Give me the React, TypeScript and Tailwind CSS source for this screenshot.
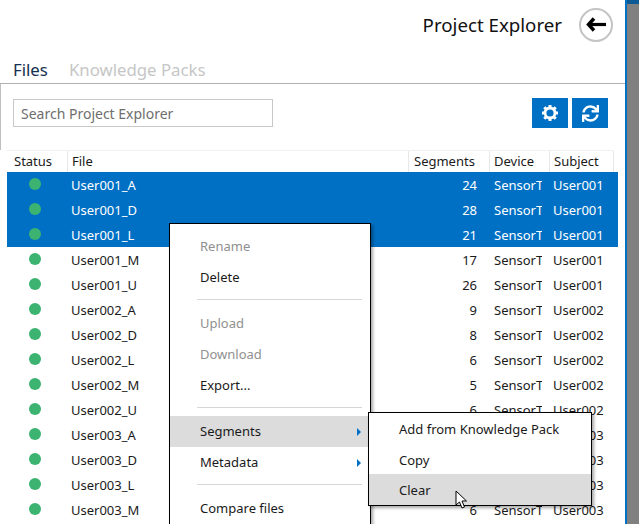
import React from 'react';
import { FaSync } from 'react-icons/fa';

type Row = { name: string; segments: number; subject: string; selected?: boolean };

const rows: Row[] = [
  { name: 'User001_A', segments: 24, subject: 'User001', selected: true },
  { name: 'User001_D', segments: 28, subject: 'User001', selected: true },
  { name: 'User001_L', segments: 21, subject: 'User001', selected: true },
  { name: 'User001_M', segments: 17, subject: 'User001' },
  { name: 'User001_U', segments: 26, subject: 'User001' },
  { name: 'User002_A', segments: 9, subject: 'User002' },
  { name: 'User002_D', segments: 8, subject: 'User002' },
  { name: 'User002_L', segments: 6, subject: 'User002' },
  { name: 'User002_M', segments: 5, subject: 'User002' },
  { name: 'User002_U', segments: 6, subject: 'User002' },
  { name: 'User003_A', segments: 6, subject: 'User003' },
  { name: 'User003_D', segments: 6, subject: 'User003' },
  { name: 'User003_L', segments: 6, subject: 'User003' },
  { name: 'User003_M', segments: 6, subject: 'User003' },
];

const MenuItem = ({ label, disabled, active, arrow }: { label: string; disabled?: boolean; active?: boolean; arrow?: boolean }) => (
  <div className={`relative flex h-[31px] items-center pl-[30px] ${active ? 'bg-[#dcdcdc]' : ''} ${disabled ? 'text-[#8f8f8f]' : 'text-[#1a1a1a]'}`}>
    {label}
    {arrow && <span className="absolute left-[187px] top-[12px] h-0 w-0 border-y-[4px] border-l-[4px] border-y-transparent border-l-[#0070c4]" />}
  </div>
);

const Divider = () => <div className="mt-[6px] mb-[8px] ml-[27px] mr-[8px] h-px bg-[#d6d6d6]" />;

const BackArrow = () => (
  <svg width="20" height="15" viewBox="0 0 20 15" fill="none" stroke="black">
    <path d="M8 1.5 L2.5 7.5 L8 13.5" strokeWidth="3.4" />
    <path d="M3 7.5 H20" strokeWidth="3.2" />
  </svg>
);

const Gear = () => (
  <svg width="18" height="18" viewBox="0 0 18 18" fill="none" stroke="white">
    <circle cx="9" cy="9" r="5" strokeWidth="2.8" />
    <path d="M9 1 V4 M9 14 V17 M1 9 H4 M14 9 H17 M3.3 3.3 L5.4 5.4 M12.6 12.6 L14.7 14.7 M14.7 3.3 L12.6 5.4 M5.4 12.6 L3.3 14.7" strokeWidth="3" />
  </svg>
);

export default function App() {
  return (
    <div className="relative flex h-[524px] w-[639px] overflow-hidden bg-[#808080] text-[13px] font-['Noto_Sans',sans-serif] text-[#1a1a1a]">
      <div className="flex h-full w-[625px] flex-col bg-white">
        <header className="flex h-[50px] items-center justify-end pb-[1px] pr-[12px]">
          <span className="mr-[17px] mt-[1px] text-[18.7px] leading-none text-[#111]">Project Explorer</span>
          <button className="flex h-[34px] w-[34px] items-center justify-center rounded-full border-2 border-[#c4c4c4]">
            <BackArrow />
          </button>
        </header>

        <div className="flex h-[34px] items-center gap-[21px] border-b border-[#b0b0b0] pl-[13px] pt-[6px] text-[16.8px]">
          <span className="text-[#14304f]">Files</span>
          <span className="text-[#c6c6c6]">Knowledge Packs</span>
        </div>

        <div className="flex h-[66px] items-start justify-between border-l border-[#c0c0c0] pl-[12px] pr-[17px] pt-[15px]">
          <div className="flex h-[28px] w-[260px] items-center border border-[#c8c8c8] pl-[7px] pt-[1px] text-[14px] text-[#6e6e6e]">Search Project Explorer</div>
          <div className="-mt-[1px] flex gap-[4px]">
            <button className="flex h-[30px] w-[36px] items-center justify-center bg-[#0070c4]">
              <Gear />
            </button>
            <button className="flex h-[30px] w-[36px] items-center justify-center bg-[#0070c4] text-white">
              <FaSync size={17} />
            </button>
          </div>
        </div>

        <div className="ml-[7px] flex h-[22px] w-[607px] items-center border-t border-[#f0f0f0]">
          <div className="flex h-full w-[61px] items-center border-r border-[#e8e8e8] pl-[7px]">Status</div>
          <div className="flex h-full w-[341px] items-center border-r border-[#e8e8e8] pl-[4px]">File</div>
          <div className="flex h-full w-[81px] items-center border-r border-[#e8e8e8] pl-[5px]">Segments</div>
          <div className="flex h-full w-[60px] items-center border-r border-[#e8e8e8] pl-[4px]">Device</div>
          <div className="flex h-full w-[64px] items-center border-r border-[#e8e8e8] pl-[4px]">Subject</div>
        </div>

        <div className="ml-[7px] w-[611px]">
          {rows.map((r) => (
            <div key={r.name} className={`flex h-[25px] items-center pt-[2px] ${r.selected ? 'bg-[#0070c4] text-white' : ''}`}>
              <div className="w-[61px] pl-[22px]">
                <div className="-mt-[3px] h-3 w-3 rounded-full bg-[#3cb371]" />
              </div>
              <div className="w-[341px] pl-[3px]">{r.name}</div>
              <div className="w-[68px] text-right">{r.segments}</div>
              <div className="mr-[8px] w-[65px] overflow-hidden whitespace-nowrap pl-[17px]">SensorT</div>
              <div className="ml-[3px]">{r.subject}</div>
            </div>
          ))}
        </div>
      </div>

      <div className="flex h-full flex-1 flex-col border-l-2 border-[#0070c4]">
        <div className="h-[4px] bg-[#0b5a96]" />
      </div>

      <div className="absolute left-[169px] top-[223px] w-[202px] border border-black bg-white pb-[4px] pt-[7px] shadow-[2px_2px_3px_rgba(0,0,0,0.35)]">
        <MenuItem label="Rename" disabled />
        <MenuItem label="Delete" />
        <Divider />
        <MenuItem label="Upload" disabled />
        <MenuItem label="Download" disabled />
        <MenuItem label="Export..." />
        <Divider />
        <MenuItem label="Segments" active arrow />
        <MenuItem label="Metadata" arrow />
        <Divider />
        <MenuItem label="Compare files" />
      </div>

      <div className="absolute left-[368px] top-[412px] w-[224px] border border-black bg-white pt-[1px] shadow-[2px_2px_3px_rgba(0,0,0,0.35)]">
        <div className="flex h-[31px] items-center pl-[30px]">Add from Knowledge Pack</div>
        <div className="flex h-[29px] items-center pl-[30px] pt-[3px]">Copy</div>
        <div className="flex h-[31px] items-center bg-[#dcdcdc] pl-[30px] pt-[2px]">Clear</div>
      </div>

      <svg className="absolute left-[455px] top-[490px]" width="13" height="20" viewBox="0 0 13 20">
        <path d="M1 1 L1 15 L4.5 12 L7 18 L9.5 17 L7 11 L11.5 11 Z" fill="white" stroke="black" strokeWidth="1" />
      </svg>
    </div>
  );
}
